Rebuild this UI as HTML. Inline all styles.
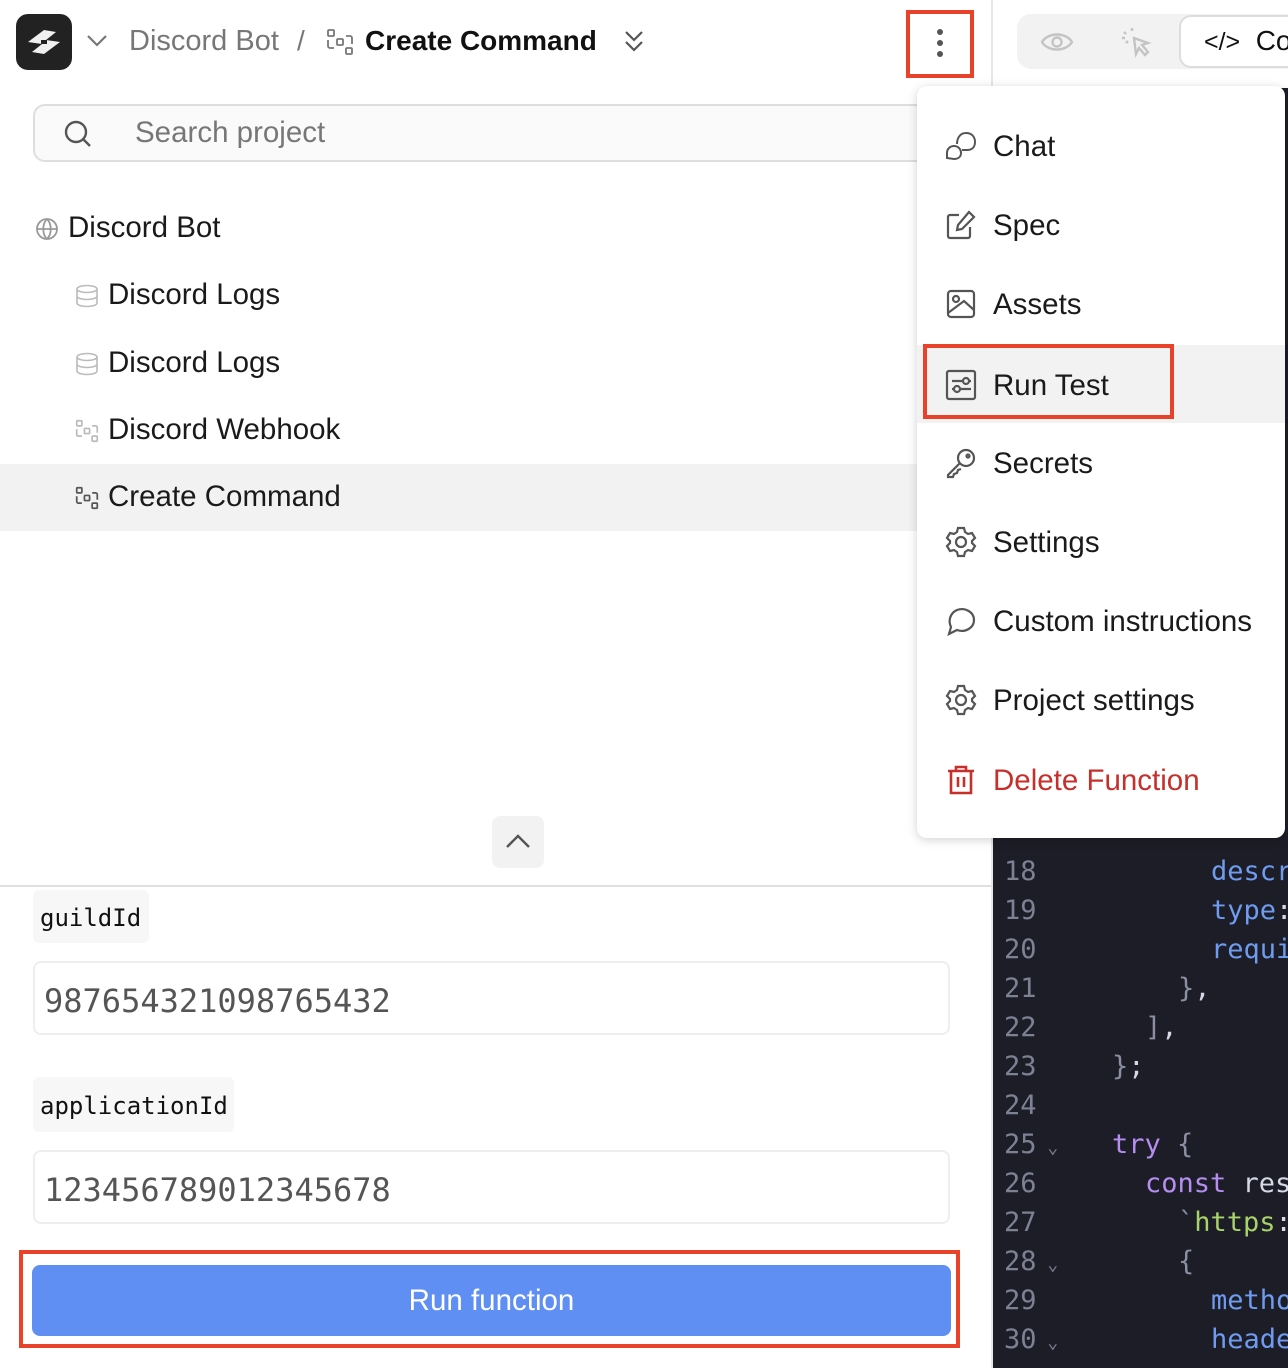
<!DOCTYPE html>
<html><head><meta charset="utf-8"><style>
*{margin:0;padding:0;box-sizing:border-box}
body{width:1288px;height:1368px;overflow:hidden;background:#fff;font-family:"Liberation Sans",sans-serif;position:relative;color:#1a1a1a}
.a{position:absolute}
.t{font-size:28px;white-space:nowrap;line-height:1}
.tt{font-size:29.5px}
.mono{font-family:"DejaVu Sans Mono","Liberation Mono",monospace}
.code{position:absolute;left:993px;top:88px;width:295px;height:1280px;background:#1c1d26}
.ln{position:absolute;left:1004px;color:#7d8194;font-size:27px;line-height:1}
.cl{position:absolute;font-size:27px;line-height:1;white-space:pre}
.b{color:#6f9cf0}.p{color:#b58ef0}.g{color:#a8d26a}.w{color:#d6d8e6}.pu{color:#8a8fa3}
.menu{position:absolute;left:917px;top:86px;width:368px;height:752px;background:#fff;border-radius:10px;box-shadow:0 2px 10px rgba(0,0,0,.18)}
.mi{position:absolute;left:0;width:368px;height:78px}
.mi span{position:absolute;left:76px;top:24px;font-size:29.5px;color:#1a1a1a;white-space:nowrap}
.mi svg{position:absolute;left:28px;top:24px}
</style></head><body>

<!-- header -->
<div class="a" style="left:16px;top:14px;width:56px;height:56px;border-radius:12px;background:#222"><svg width="56" height="56" viewBox="0 0 56 56"><path d="M12 28 L28 16 L40 18 L30 26 L44 28 L28 40 L16 38 L26 30 Z" fill="#f0f0f0"/><rect x="25" y="26" width="6" height="4" fill="#222"/></svg></div>
<svg class="a" style="left:86px;top:32px" width="22" height="16" viewBox="0 0 22 16"><path d="M2 4 L11 13 L20 4" stroke="#777" stroke-width="2.2" fill="none"/></svg>
<div class="a t" style="left:129px;top:27px;color:#777;font-size:29px">Discord Bot</div>
<div class="a t" style="left:297px;top:27px;color:#777">/</div>
<svg class="a" style="left:326px;top:28px" width="28" height="28" viewBox="0 0 28 28" fill="none" stroke="#777" stroke-width="1.8"><rect x="2" y="2" width="6" height="6" rx="1"/><rect x="11" y="11" width="6" height="6" rx="1"/><rect x="20" y="20" width="6" height="6" rx="1"/><path d="M2 12v6a2 2 0 0 0 2 2h4M26 16v-6a2 2 0 0 0-2-2h-4"/></svg>
<div class="a t" style="left:365px;top:27px;font-weight:bold;color:#111">Create Command</div>
<svg class="a" style="left:622px;top:28px" width="24" height="26" viewBox="0 0 24 26"><path d="M4 4 L12 12 L20 4 M4 14 L12 22 L20 14" stroke="#555" stroke-width="2.2" fill="none"/></svg>
<div class="a" style="left:906px;top:10px;width:68px;height:68px;border:4px solid #e8432a"></div>
<div class="a" style="left:937px;top:29px;width:6px;height:6px;border-radius:3px;background:#555"></div>
<div class="a" style="left:937px;top:40px;width:6px;height:6px;border-radius:3px;background:#555"></div>
<div class="a" style="left:937px;top:51px;width:6px;height:6px;border-radius:3px;background:#555"></div>
<div class="a" style="left:991px;top:0;width:2px;height:88px;background:#e6e6e6"></div>

<!-- right toolbar -->
<div class="a" style="left:1017px;top:14px;width:290px;height:55px;border-radius:14px;background:#f2f2f2"></div>
<svg class="a" style="left:1040px;top:30px" width="34" height="24" viewBox="0 0 34 24" fill="none" stroke="#c4c4c4" stroke-width="2.4"><path d="M2 12 C8 2 26 2 32 12 C26 22 8 22 2 12Z"/><circle cx="17" cy="12" r="4.5"/></svg>
<svg class="a" style="left:1120px;top:26px" width="34" height="32" viewBox="0 0 34 32" fill="none" stroke="#c4c4c4" stroke-width="2.4"><path d="M14 12 L28 17 L22 19 L28 26 L25 29 L19 22 L16 28 Z"/><path d="M12 2v3M4 6l2 2M2 12h3M6 17l2-2"/></svg>
<div class="a" style="left:1179px;top:15px;width:140px;height:53px;border-radius:12px;background:#fff;border:2px solid #ddd"></div>
<div class="a t" style="left:1204px;top:27px;color:#111"><span style="font-size:25px">&lt;/&gt;</span>&nbsp; Co</div>

<!-- search -->
<div class="a" style="left:33px;top:104px;width:940px;height:58px;border-radius:12px;border:2px solid #dedede;background:#fafafa"></div>
<svg class="a" style="left:63px;top:119px" width="30" height="30" viewBox="0 0 30 30" fill="none" stroke="#555" stroke-width="2.4"><circle cx="13" cy="13" r="10"/><path d="M20.5 20.5 L27 27"/></svg>
<div class="a t tt" style="left:135px;top:118px;color:#777">Search project</div>

<!-- tree -->
<svg class="a" style="left:35px;top:217px" width="24" height="24" viewBox="0 0 24 24" fill="none" stroke="#999" stroke-width="1.8"><circle cx="12" cy="12" r="10"/><path d="M2 12h20M12 2c-5 5-5 15 0 20M12 2c5 5 5 15 0 20"/></svg>
<div class="a t tt" style="left:68px;top:213px">Discord Bot</div>
<svg class="a" style="left:75px;top:284px" width="24" height="24" viewBox="0 0 24 24" fill="none" stroke="#bbb" stroke-width="1.6"><ellipse cx="12" cy="5" rx="10" ry="3.5"/><path d="M2 5v14c0 2 4.5 3.5 10 3.5s10-1.5 10-3.5V5M2 12c0 2 4.5 3.5 10 3.5S22 14 22 12"/></svg>
<div class="a t tt" style="left:108px;top:280px">Discord Logs</div>
<svg class="a" style="left:75px;top:352px" width="24" height="24" viewBox="0 0 24 24" fill="none" stroke="#bbb" stroke-width="1.6"><ellipse cx="12" cy="5" rx="10" ry="3.5"/><path d="M2 5v14c0 2 4.5 3.5 10 3.5s10-1.5 10-3.5V5M2 12c0 2 4.5 3.5 10 3.5S22 14 22 12"/></svg>
<div class="a t tt" style="left:108px;top:348px">Discord Logs</div>
<svg class="a" style="left:75px;top:419px" width="24" height="24" viewBox="0 0 28 28" fill="none" stroke="#bbb" stroke-width="2"><rect x="2" y="2" width="6" height="6" rx="1"/><rect x="11" y="11" width="6" height="6" rx="1"/><rect x="20" y="20" width="6" height="6" rx="1"/><path d="M2 12v6a2 2 0 0 0 2 2h4M26 16v-6a2 2 0 0 0-2-2h-4"/></svg>
<div class="a t tt" style="left:108px;top:415px">Discord Webhook</div>
<div class="a" style="left:0;top:464px;width:992px;height:67px;background:#f2f2f2"></div>
<svg class="a" style="left:75px;top:486px" width="24" height="24" viewBox="0 0 28 28" fill="none" stroke="#555" stroke-width="2"><rect x="2" y="2" width="6" height="6" rx="1"/><rect x="11" y="11" width="6" height="6" rx="1"/><rect x="20" y="20" width="6" height="6" rx="1"/><path d="M2 12v6a2 2 0 0 0 2 2h4M26 16v-6a2 2 0 0 0-2-2h-4"/></svg>
<div class="a t tt" style="left:108px;top:482px">Create Command</div>

<!-- collapse -->
<div class="a" style="left:492px;top:816px;width:52px;height:52px;border-radius:8px;background:#f2f2f2"></div>
<svg class="a" style="left:505px;top:832px" width="26" height="18" viewBox="0 0 26 18"><path d="M2 15 L13 4 L24 15" stroke="#555" stroke-width="2.4" fill="none"/></svg>
<div class="a" style="left:0;top:885px;width:993px;height:2px;background:#e0e0e0"></div>

<!-- form -->
<div class="a" style="left:33px;top:890px;width:116px;height:53px;border-radius:6px;background:#f7f7f7"></div>
<div class="a mono" style="left:40px;top:904px;font-size:24px;color:#111">guildId</div>
<div class="a" style="left:33px;top:961px;width:917px;height:74px;border-radius:8px;border:2px solid #eee"></div>
<div class="a mono" style="left:44px;top:982px;font-size:32px;color:#555">987654321098765432</div>
<div class="a" style="left:33px;top:1077px;width:201px;height:55px;border-radius:6px;background:#f7f7f7"></div>
<div class="a mono" style="left:40px;top:1092px;font-size:24px;color:#111">applicationId</div>
<div class="a" style="left:33px;top:1150px;width:917px;height:74px;border-radius:8px;border:2px solid #eee"></div>
<div class="a mono" style="left:44px;top:1171px;font-size:32px;color:#555">123456789012345678</div>
<div class="a" style="left:19px;top:1250px;width:941px;height:98px;border:4px solid #e8432a"></div>
<div class="a" style="left:32px;top:1265px;width:919px;height:71px;border-radius:8px;background:#5f8ff2"></div>
<div class="a t tt" style="left:32px;top:1286px;width:919px;text-align:center;color:#fff">Run function</div>

<!-- code -->
<div class="a" style="left:991px;top:88px;width:2px;height:1280px;background:#e6e6e6"></div>
<div class="code"></div>
<div class="ln mono" style="top:858px">18</div><div class="cl mono b" style="left:1211px;top:858px">descr</div>
<div class="ln mono" style="top:897px">19</div><div class="cl mono b" style="left:1211px;top:897px">type<span class="w">:</span></div>
<div class="ln mono" style="top:936px">20</div><div class="cl mono b" style="left:1211px;top:936px">requi</div>
<div class="ln mono" style="top:975px">21</div><div class="cl mono pu" style="left:1178px;top:975px">}<span class="w">,</span></div>
<div class="ln mono" style="top:1014px">22</div><div class="cl mono pu" style="left:1145px;top:1014px">]<span class="w">,</span></div>
<div class="ln mono" style="top:1053px">23</div><div class="cl mono pu" style="left:1112px;top:1053px">}<span class="w">;</span></div>
<div class="ln mono" style="top:1092px">24</div>
<div class="ln mono" style="top:1131px">25<span style="font-size:18px"> ⌄</span></div><div class="cl mono p" style="left:1112px;top:1131px">try <span class="pu">{</span></div>
<div class="ln mono" style="top:1170px">26</div><div class="cl mono p" style="left:1145px;top:1170px">const <span class="w">res</span></div>
<div class="ln mono" style="top:1209px">27</div><div class="cl mono g" style="left:1178px;top:1209px"><span class="pu">`</span>https<span class="w">:</span></div>
<div class="ln mono" style="top:1248px">28<span style="font-size:18px"> ⌄</span></div><div class="cl mono pu" style="left:1178px;top:1248px">{</div>
<div class="ln mono" style="top:1287px">29</div><div class="cl mono b" style="left:1211px;top:1287px">metho</div>
<div class="ln mono" style="top:1326px">30<span style="font-size:18px"> ⌄</span></div><div class="cl mono b" style="left:1211px;top:1326px">heade</div>

<!-- menu -->
<div class="menu">
 <div class="mi" style="top:20px"><svg width="32" height="32" viewBox="0 0 32 32" fill="none" stroke="#555" stroke-width="2"><path d="M12 14 C12 7 16 3 21 3 C27 3 30 7 30 12 C30 17 27 20 22 20 H17"/><path d="M2 28 V23 C2 19 5 16 9 16 C13 16 16 19 16 23 C16 27 13 29 9 29 Z"/></svg><span>Chat</span></div>
 <div class="mi" style="top:99px"><svg width="32" height="32" viewBox="0 0 32 32" fill="none" stroke="#555" stroke-width="2.2"><path d="M14 6 H5 a2 2 0 0 0 -2 2 V27 a2 2 0 0 0 2 2 H23 a2 2 0 0 0 2-2 V18"/><path d="M24 3 L29 8 L17 20 L12 21 L13 16 Z"/></svg><span>Spec</span></div>
 <div class="mi" style="top:178px"><svg width="32" height="32" viewBox="0 0 32 32" fill="none" stroke="#555" stroke-width="2.2"><rect x="3" y="3" width="26" height="26" rx="3"/><circle cx="11" cy="11" r="3"/><path d="M3 25 L19 13 L29 22"/></svg><span>Assets</span></div>
 <div class="mi" style="top:259px;background:#f2f2f2"><svg width="32" height="32" viewBox="0 0 32 32" fill="none" stroke="#555" stroke-width="2.2"><rect x="2" y="2" width="28" height="28" rx="2"/><path d="M7 12h11M24 12h2M7 20h2M15 20h11"/><circle cx="21" cy="12" r="3"/><circle cx="12" cy="20" r="3"/></svg><span>Run Test</span></div>
 <div class="mi" style="top:337px"><svg width="32" height="32" viewBox="0 0 32 32" fill="none" stroke="#555" stroke-width="2.2"><circle cx="21" cy="11" r="8"/><circle cx="23" cy="9" r="1.5"/><path d="M15 16 L3 28 V30 H8 L9 27 L12 26 L13 23 L16 22"/></svg><span>Secrets</span></div>
 <div class="mi" style="top:416px"><svg width="32" height="32" viewBox="0 0 32 32" fill="none" stroke="#555" stroke-width="2.2"><path d="M13 2h6l1 4 3 2 4-1 3 5-3 3v2l3 3-3 5-4-1-3 2-1 4h-6l-1-4-3-2-4 1-3-5 3-3v-2l-3-3 3-5 4 1 3-2z"/><circle cx="16" cy="16" r="5"/></svg><span>Settings</span></div>
 <div class="mi" style="top:495px"><svg width="32" height="32" viewBox="0 0 32 32" fill="none" stroke="#555" stroke-width="2.2"><path d="M4 29 L6 22 C3 16 5 8 12 5 C20 2 29 7 29 15 C29 23 20 28 12 25 Z"/></svg><span>Custom instructions</span></div>
 <div class="mi" style="top:574px"><svg width="32" height="32" viewBox="0 0 32 32" fill="none" stroke="#555" stroke-width="2.2"><path d="M13 2h6l1 4 3 2 4-1 3 5-3 3v2l3 3-3 5-4-1-3 2-1 4h-6l-1-4-3-2-4 1-3-5 3-3v-2l-3-3 3-5 4 1 3-2z"/><circle cx="16" cy="16" r="5"/></svg><span>Project settings</span></div>
 <div class="mi" style="top:654px"><svg width="32" height="32" viewBox="0 0 32 32" fill="none" stroke="#c62f2a" stroke-width="2.6"><path d="M3 7h26M11 7V3h10v4M6 7v22h20V7M13 13v10M19 13v10"/></svg><span style="color:#c62f2a">Delete Function</span></div>
</div>
<div class="a" style="left:923px;top:344px;width:251px;height:75px;border:4px solid #e8432a"></div>
</body></html>
